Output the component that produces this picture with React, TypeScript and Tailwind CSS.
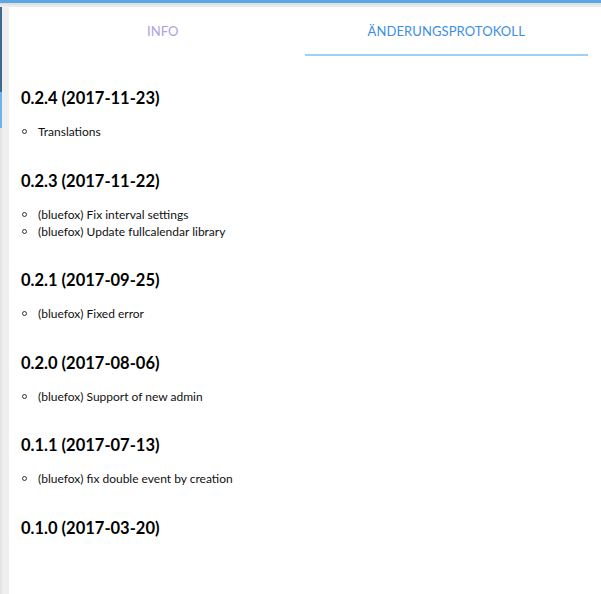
import React, { useState } from 'react';

type Release = {
    version: string;
    date: string;
    changes: string[];
};

const releases: Release[] = [
    { version: '0.2.4', date: '2017-11-23', changes: ['Translations'] },
    {
        version: '0.2.3',
        date: '2017-11-22',
        changes: ['(bluefox) Fix interval settings', '(bluefox) Update fullcalendar library'],
    },
    { version: '0.2.1', date: '2017-09-25', changes: ['(bluefox) Fixed error'] },
    { version: '0.2.0', date: '2017-08-06', changes: ['(bluefox) Support of new admin'] },
    { version: '0.1.1', date: '2017-07-13', changes: ['(bluefox) fix double event by creation'] },
    { version: '0.1.0', date: '2017-03-20', changes: [] },
];

const tabs = ['INFO', 'ÄNDERUNGSPROTOKOLL'];

const App: React.FC = () => {
    const [active, setActive] = useState(1);

    return (
        <div className="flex h-[594px] w-[601px] flex-col overflow-hidden bg-white font-['Lato',sans-serif]">
            {/* top bar */}
            <div className="h-[3px] bg-[#5ba7e6]" />
            <div className="h-[4px] bg-gradient-to-b from-[#dcdcdc] to-[#efefef]" />

            <div className="flex flex-1">
                {/* left edge of the page behind the dialog */}
                <div className="flex w-[2px] flex-col">
                    <div className="h-[85px] bg-[#3f6a8f]" />
                    <div className="h-[36px] bg-[#6ab4f2]" />
                    <div className="flex-1 bg-[#e4e4e4]" />
                </div>
                <div className="w-[7px] bg-[#efefef]" />

                <div className="flex-1 pl-[12px] pr-[13px]">
                    <div className="flex h-[49px]">
                        {tabs.map((tab, i) => (
                            <button
                                key={tab}
                                onClick={() => setActive(i)}
                                className={
                                    'flex flex-1 items-center justify-center border-b-2 pt-[2px] text-[13px] tracking-[0.1px] ' +
                                    (i === active
                                        ? 'border-[#9fd1f7] text-[#3b8ee6]'
                                        : 'border-transparent text-[#a7a4e2]')
                                }
                            >
                                {tab}
                            </button>
                        ))}
                    </div>

                    <div className="flex flex-col gap-[31.5px] pt-[33px] text-[#111]">
                        {releases.map(r => (
                            <div key={r.version} className="flex flex-col gap-[15px]">
                                <h3 className="text-[16.5px] font-bold leading-[19px] text-black">
                                    {r.version} ({r.date})
                                </h3>
                                {r.changes.length > 0 && (
                                    <ul className="flex flex-col">
                                        {r.changes.map(c => (
                                            <li key={c} className="flex items-center text-[12px] leading-[17px]">
                                                <span className="ml-[1px] mr-[11px] h-[5px] w-[5px] rounded-full border border-[#333]" />
                                                {c}
                                            </li>
                                        ))}
                                    </ul>
                                )}
                            </div>
                        ))}
                    </div>
                </div>
            </div>
        </div>
    );
};

export default App;
